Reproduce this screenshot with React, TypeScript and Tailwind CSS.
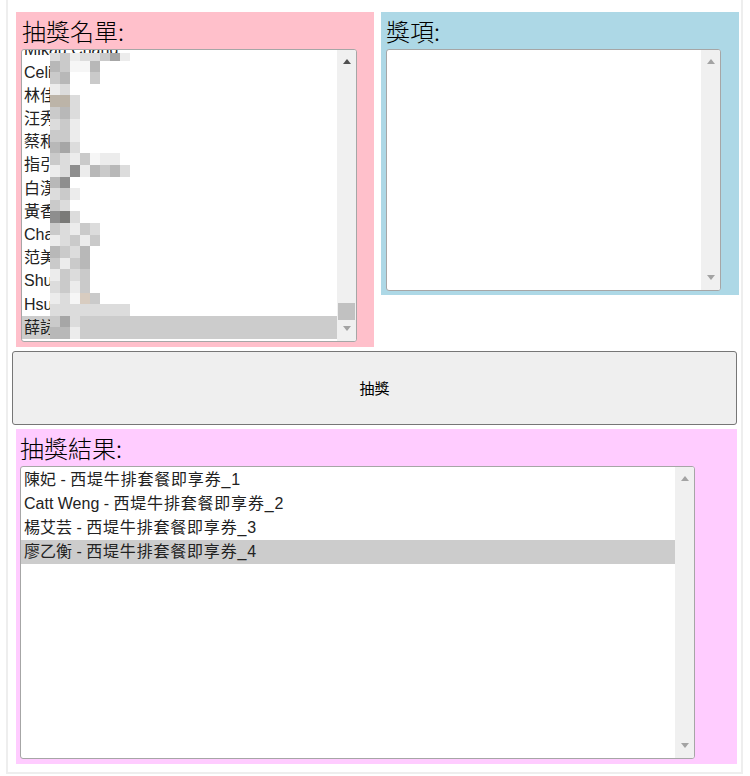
import React from "react";

const FONT = '"Liberation Sans", "Noto Sans CJK TC", Arial, sans-serif';
const CJK = '"Noto Sans CJK TC", "Liberation Sans", sans-serif';

const P: Record<string, string> = {
  a: "#ececec",
  b: "#dcdcdc",
  c: "#cacaca",
  d: "#b8b8b8",
  e: "#a6a6a6",
  f: "#f6f6f6",
  g: "#bcb4a8",
  h: "#8e8e8e",
  k: "#7a7a78",
  w: "#ffffff",
  t: "#d8ccc0",
};

type Entry = { t: string; m: string[]; top?: number };

const names: Entry[] = [
  { t: "Mikau Chang", m: ["bcabbcea"], top: 15 },
  { t: "Celine", m: ["dcffd", "cdwwc"] },
  { t: "林佳", m: ["ab", "ggb"] },
  { t: "汪秀", m: ["cdb", "bca"] },
  { t: "蔡和", m: ["cca", "deb"] },
  { t: "指引", m: ["cbacfaa", "abhadcdb"] },
  { t: "白漢", m: ["dh", "bca"] },
  { t: "黃香", m: ["cb", "hkb"] },
  { t: "Chang", m: ["cbacb", "abcac"] },
  { t: "范美", m: ["dcbd", "cacd"] },
  { t: "Shuan", m: ["acbc", "bcac"] },
  { t: "Hsuan", m: ["abftc", "bbbbbbbb"] },
  { t: "薛詠", m: ["ceb", "dda"] },
];

const results = [
  ["陳妃", "西堤牛排套餐即享券_1"],
  ["Catt Weng", "西堤牛排套餐即享券_2"],
  ["楊艾芸", "西堤牛排套餐即享券_3"],
  ["廖乙衡", "西堤牛排套餐即享券_4"],
];

function Tri({ up, dark }: { up?: boolean; dark?: boolean }) {
  return (
    <svg width="8" height="5" viewBox="0 0 8 5" className="block">
      <polygon
        points={up ? "0,5 4,0 8,5" : "0,0 8,0 4,5"}
        fill={dark ? "#505050" : "#a3a3a3"}
      />
    </svg>
  );
}

function ScrollBar({ upDark, thumb }: { upDark?: boolean; thumb?: boolean }) {
  return (
    <div className="w-[19px] shrink-0 bg-[#f0f0f0] flex flex-col items-center">
      <div className="h-[16px] pt-[9px]">
        <Tri up dark={upDark} />
      </div>
      <div className="flex-1 w-full flex flex-col justify-end items-center">
        {thumb && <div className="w-[17px] h-[17px] bg-[#c1c1c1]" />}
      </div>
      <div className="h-[21px] pt-[6px]">
        <Tri />
      </div>
    </div>
  );
}

function Mosaic({ m, top }: { m: string[]; top?: number }) {
  return (
    <div
      className="absolute left-[28px] flex flex-col"
      style={{ top: top ?? 0, height: top ? 23.2 - top : 23.2 }}
    >
      {m.map((row, i) => (
        <div key={i} className="flex flex-1">
          {row.split("").map((ch, j) => (
            <div
              key={j}
              className="w-[10px] h-full"
              style={{ backgroundColor: ch === " " ? "transparent" : P[ch] }}
            />
          ))}
        </div>
      ))}
    </div>
  );
}

function Title({ children, pl }: { children: React.ReactNode; pl: string }) {
  return (
    <div
      className={`h-[37px] pt-[4px] text-[24px] leading-[30px] font-light text-black ${pl}`}
      style={{ fontFamily: CJK }}
    >
      {children}
    </div>
  );
}

export default function App() {
  return (
    <div className="w-[750px] h-[776px] bg-white overflow-hidden" style={{ fontFamily: FONT }}>
      <div className="ml-[6px] w-[737px] h-[774px] border-x-2 border-b-2 border-[#eeeeee] pt-[12px]">
        <div className="flex items-start gap-[7px] pl-[8px]">
          {/* 抽獎名單 */}
          <div className="w-[358px] h-[335px] bg-[#ffc0cb]">
            <Title pl="pl-[6px]">抽獎名單:</Title>
            <div className="ml-[5px] w-[336px] h-[293px] bg-white border border-[#a6a6a6] rounded-[3px] flex overflow-hidden">
              <div className="flex-1 overflow-hidden">
                <div className="mt-[-12.5px]">
                  {names.map((n, i) => (
                    <div
                      key={i}
                      className={`relative h-[23.2px] leading-[23.2px] pl-[2px] text-[16px] text-[#222] whitespace-nowrap ${
                        i === names.length - 1 ? "bg-[#cccccc]" : ""
                      }`}
                    >
                      {n.t}
                      <Mosaic m={n.m} top={n.top} />
                    </div>
                  ))}
                </div>
              </div>
              <ScrollBar upDark thumb />
            </div>
          </div>
          {/* 獎項 */}
          <div className="w-[358px] h-[283px] bg-[#add8e6]">
            <Title pl="pl-[5px]">獎項:</Title>
            <div className="ml-[5px] w-[335px] h-[242px] bg-white border border-[#a6a6a6] rounded-[3px] flex overflow-hidden">
              <div className="flex-1" />
              <ScrollBar />
            </div>
          </div>
        </div>

        <button
          className="block ml-[4px] mt-[4px] w-[725px] h-[74px] bg-[#efefef] border border-[#767676] rounded-[3px] text-[15px] text-black"
          style={{ fontFamily: CJK }}
        >
          抽獎
        </button>

        <div className="ml-[8px] mt-[4px] w-[721px] h-[335px] bg-[#ffccff]">
          <Title pl="pl-[4px]">抽獎結果:</Title>
          <div className="ml-[4px] w-[675px] h-[293px] bg-white border border-[#a6a6a6] rounded-[3px] flex overflow-hidden">
            <div className="flex-1 pt-[1px]">
              {results.map((r, i) => (
                <div
                  key={i}
                  className={`h-[24px] leading-[24px] pl-[3px] text-[16px] text-[#222] whitespace-nowrap ${
                    i === results.length - 1 ? "bg-[#cccccc]" : ""
                  }`}
                >
                  {r[0]} - <span className="tracking-[0.8px]">{r[1]}</span>
                </div>
              ))}
            </div>
            <ScrollBar />
          </div>
        </div>
      </div>
    </div>
  );
}
